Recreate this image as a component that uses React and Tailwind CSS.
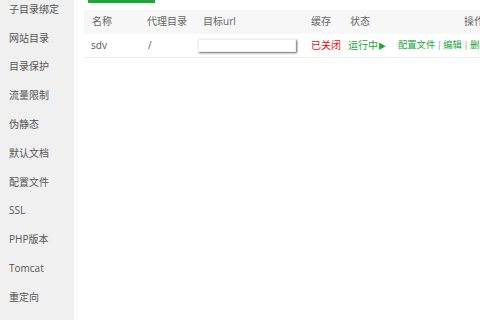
const menu = [
  "子目录绑定",
  "网站目录",
  "目录保护",
  "流量限制",
  "伪静态",
  "默认文档",
  "配置文件",
  "SSL",
  "PHP版本",
  "Tomcat",
  "重定向",
];

const font = { fontFamily: '"Open Sans", "Noto Sans CJK SC", sans-serif' };

const App = () => {
  return (
    <div className="flex w-[480px] h-[320px] overflow-hidden bg-white" style={font}>
      <div className="w-[74px] shrink-0 bg-[#f0f0f0] overflow-hidden">
        <div className="-mt-[5px]">
          {menu.map((item) => (
            <div key={item} className="h-[28.8px] flex items-center pl-[9px] text-[10px] text-[#555]">
              {item}
            </div>
          ))}
        </div>
      </div>
      <div className="flex-1 overflow-hidden pl-[10px]">
        <div className="ml-[4px] w-[67px] h-[2.5px] bg-[#20a53a]"></div>
        <table className="mt-[7px] w-[404px] table-fixed text-[10px] text-[#666] border-collapse whitespace-nowrap">
          <colgroup>
            <col className="w-[55px]" />
            <col className="w-[56px]" />
            <col className="w-[108px]" />
            <col className="w-[39px]" />
            <col className="w-[48px]" />
            <col />
          </colgroup>
          <thead>
            <tr className="bg-[#f7f7f7] h-[24px]">
              <th className="pl-[8px] text-left font-normal">名称</th>
              <th className="pl-[8px] text-left font-normal">代理目录</th>
              <th className="pl-[8px] text-left font-normal">目标url</th>
              <th className="pl-[8px] text-left font-normal">缓存</th>
              <th className="pl-[8px] text-left font-normal">状态</th>
              <th className="pr-[4px] text-right font-normal">操作</th>
            </tr>
          </thead>
          <tbody>
            <tr className="h-[24px] border-b border-[#eee]">
              <td className="pl-[7px] text-[#555]">sdv</td>
              <td className="pl-[9px] text-[#555]">/</td>
              <td className="pl-[3px]">
                <div className="w-[98px] h-[13px] bg-white border border-[#eee] shadow-[1px_1px_2px_#666]"></div>
              </td>
              <td className="pl-[8px] text-[#ef0808]">已关闭</td>
              <td className="pl-[6px] text-[#20a53a]">
                运行中<span className="text-[8px]">▶</span>
              </td>
              <td className="pl-[8px] text-[9.3px] text-[#20a53a]">
                配置文件<span className="mx-[1.5px] text-[#999]">|</span>编辑
                <span className="mx-[1.5px] text-[#999]">|</span>删除
              </td>
            </tr>
          </tbody>
        </table>
      </div>
    </div>
  );
};

export default App;
